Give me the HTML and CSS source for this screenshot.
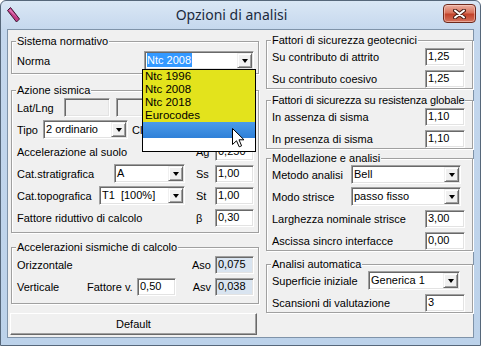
FILE: index.html
```html
<!DOCTYPE html>
<html>
<head>
  <meta charset="UTF-8">
  <title>Opzioni di analisi</title>
  <link rel="stylesheet" href="styles.css">
</head>
<body>
<div class="window">
  <div class="titlebar">
    <svg class="app-icon" width="13" height="16" viewBox="0 0 13 16">
      <polygon points="0.5,3.5 3.5,0.5 12.5,12 9.5,15" fill="#c23a86" stroke="#3b1830" stroke-width="1"/>
      <polygon points="2,3.5 3.5,2 10.5,11" fill="#e07ab8"/>
    </svg>
    <div class="title">Opzioni di analisi</div>
    <div class="close-btn">
      <svg width="13" height="10" viewBox="0 0 13 10">
        <path d="M2,1.5 L11,8.5 M11,1.5 L2,8.5" stroke="#4a1e16" stroke-width="4" stroke-linecap="round"/>
        <path d="M2,1.5 L11,8.5 M11,1.5 L2,8.5" stroke="#fff" stroke-width="2" stroke-linecap="round"/>
      </svg>
    </div>
  </div>

  <div class="client">
    <!-- colonna sinistra -->
    <div class="col col-left">
      <fieldset class="group g-norma">
        <legend>Sistema normativo</legend>
        <div class="rows">
          <div class="row">
            <span class="lbl grow">Norma</span>
            <div class="combo w-norma"><span class="combo-text"><span class="sel">Ntc 2008</span></span><span class="combo-btn"></span></div>
          </div>
        </div>
      </fieldset>

      <fieldset class="group g-azione">
        <legend>Azione sismica</legend>
        <div class="rows">
          <div class="row">
            <span class="lbl w-latlng">Lat/Lng</span>
            <div class="edit disabled w-coord"></div>
            <div class="edit disabled w-coord"></div>
          </div>
          <div class="row">
            <span class="lbl w-tipo">Tipo</span>
            <div class="combo w-tipocombo"><span class="combo-text">2 ordinario</span><span class="combo-btn"></span></div>
            <span class="lbl w-classe">Classe</span>
            <div class="combo grow"><span class="combo-text">II</span><span class="combo-btn"></span></div>
          </div>
          <div class="row">
            <span class="lbl grow">Accelerazione al suolo</span>
            <span class="sym">Ag</span>
            <div class="edit">0,250</div>
          </div>
          <div class="row">
            <span class="lbl grow">Cat.stratigrafica</span>
            <div class="combo w-strat"><span class="combo-text">A</span><span class="combo-btn"></span></div>
            <span class="sym">Ss</span>
            <div class="edit">1,00</div>
          </div>
          <div class="row">
            <span class="lbl grow">Cat.topografica</span>
            <div class="combo w-topo"><span class="combo-text">T1&nbsp; [100%]</span><span class="combo-btn"></span></div>
            <span class="sym">St</span>
            <div class="edit">1,00</div>
          </div>
          <div class="row">
            <span class="lbl grow">Fattore riduttivo di calcolo</span>
            <span class="sym">β</span>
            <div class="edit">0,30</div>
          </div>
        </div>
      </fieldset>

      <fieldset class="group g-acc">
        <legend>Accelerazioni sismiche di calcolo</legend>
        <div class="rows rows-acc">
          <div class="row row-acc">
            <span class="lbl grow">Orizzontale</span>
            <span class="sym-acc">Aso</span>
            <div class="edit readonly">0,075</div>
          </div>
          <div class="row row-acc">
            <span class="lbl w-vert">Verticale</span>
            <span class="lbl w-fatt">Fattore v.</span>
            <div class="edit">0,50</div>
            <span class="lbl grow"></span>
            <span class="sym-acc">Asv</span>
            <div class="edit readonly">0,038</div>
          </div>
        </div>
      </fieldset>

      <div class="btn">Default</div>
    </div>

    <!-- colonna destra -->
    <div class="col col-right">
      <fieldset class="group g-geo">
        <legend>Fattori di sicurezza geotecnici</legend>
        <div class="rows">
          <div class="row"><span class="lbl grow">Su contributo di attrito</span><div class="edit w-right">1,25</div></div>
          <div class="row"><span class="lbl grow">Su contributo coesivo</span><div class="edit w-right">1,25</div></div>
        </div>
      </fieldset>

      <fieldset class="group g-glob">
        <legend>Fattori di sicurezza su resistenza globale</legend>
        <div class="rows">
          <div class="row"><span class="lbl grow">In assenza di sisma</span><div class="edit w-right">1,10</div></div>
          <div class="row"><span class="lbl grow">In presenza di sisma</span><div class="edit w-right">1,10</div></div>
        </div>
      </fieldset>

      <fieldset class="group g-mod">
        <legend>Modellazione e analisi</legend>
        <div class="rows">
          <div class="row">
            <span class="lbl grow">Metodo analisi</span>
            <div class="combo w-metodo"><span class="combo-text">Bell</span><span class="combo-btn"></span></div>
          </div>
          <div class="row">
            <span class="lbl grow">Modo strisce</span>
            <div class="combo w-metodo"><span class="combo-text">passo fisso</span><span class="combo-btn"></span></div>
          </div>
          <div class="row"><span class="lbl grow">Larghezza nominale strisce</span><div class="edit w-right">3,00</div></div>
          <div class="row"><span class="lbl grow">Ascissa sincro interfacce</span><div class="edit w-right">0,00</div></div>
        </div>
      </fieldset>

      <fieldset class="group g-auto">
        <legend>Analisi automatica</legend>
        <div class="rows">
          <div class="row">
            <span class="lbl grow">Superficie iniziale</span>
            <div class="combo w-superf"><span class="combo-text">Generica 1</span><span class="combo-btn"></span></div>
          </div>
          <div class="row"><span class="lbl grow">Scansioni di valutazione</span><div class="edit w-right">3</div></div>
        </div>
      </fieldset>
    </div>
  </div>

  <!-- lista aperta della combo Norma -->
  <div class="dropdown">
    <div class="dd-item">Ntc 1996</div>
    <div class="dd-item">Ntc 2008</div>
    <div class="dd-item">Ntc 2018</div>
    <div class="dd-item">Eurocodes</div>
    <div class="dd-sel"></div>
    <div class="dd-empty"></div>
  </div>

  <svg class="cursor" width="13" height="20" viewBox="0 0 13 20">
    <path d="M0.5,0.5 L0.5,16.5 L4.5,12.8 L7.2,18.8 L9.6,17.8 L7,11.8 L12,11.8 Z" fill="#fff" stroke="#000" stroke-width="1" stroke-linejoin="miter"/>
  </svg>
</div>
</body>
</html>
```

FILE: styles.css
```css
body {
  margin: 0;
  font-family: "Liberation Sans", Arial, sans-serif;
  font-size: 11px;
  color: #000;
  background: #fff;
}

.window {
  position: relative;
  width: 481px;
  height: 346px;
  box-sizing: border-box;
  border: 1px solid #56677a;
  border-radius: 6px 6px 0 0;
  background: linear-gradient(#dae7f5, #c4d7ed 30px, #bcd2ea);
  padding: 0 6px 7px 6px;
  display: flex;
  flex-direction: column;
}

/* barra del titolo */
.titlebar {
  height: 28px;
  display: flex;
  align-items: flex-start;
}

.app-icon {
  margin-top: 6px;
  flex: none;
}

.title {
  flex: 1;
  text-align: center;
  font-family: "Noto Sans", "Open Sans", sans-serif;
  font-size: 14px;
  line-height: 28px;
  color: #1b2a3d;
}

.close-btn {
  width: 31px;
  height: 17px;
  margin-top: 3px;
  margin-right: -2px;
  border: 1px solid #6e2a1d;
  border-radius: 4px;
  background: linear-gradient(#eab0a2, #d8735c 45%, #c2432b 55%, #d4735e);
  box-shadow: inset 0 0 0 1px rgba(255, 220, 210, 0.5);
  display: flex;
  align-items: center;
  justify-content: center;
}

/* area client */
.client {
  flex: 1;
  background: #f0f0f0;
  border: 1px solid #7f93a9;
  display: flex;
  gap: 7px;
  padding: 0 0 0 3px;
}

.col {
  display: flex;
  flex-direction: column;
}

.col-left {
  width: 248px;
}

.col-right {
  width: 207px;
}

.group {
  margin: 0;
  min-width: 0;
  border: 1px solid #a0a0a0;
  box-shadow: inset 1px 1px 0 #fff, 1px 1px 0 #fff;
  padding: 0 4px 0 5px;
}

.group legend {
  padding: 0 1px;
  margin-left: -1px;
  line-height: 13px;
  white-space: nowrap;
  background: #f0f0f0;
}

.col-right .group {
  padding: 0 7px 0 5px;
}

.g-glob legend {
  letter-spacing: -0.15px;
}

.g-norma  { margin-top: 5px;  padding-top: 3px; padding-bottom: 3px; }
.g-azione { margin-top: 10px; padding-top: 1px; padding-bottom: 5px; }
.g-acc    { margin-top: 8px;  padding-top: 2px; padding-bottom: 7px; }
.g-geo    { margin-top: 4px;  padding-top: 5px; padding-bottom: 3px; }
.g-glob   { margin-top: 5px;  padding-top: 2px; padding-bottom: 2px; }
.g-mod    { margin-top: 3px;  padding-top: 4px; padding-bottom: 2px; }
.g-auto   { margin-top: 7px;  padding-top: 1px; padding-bottom: 4px; }

.rows {
  display: flex;
  flex-direction: column;
  gap: 3px;
}

.rows-acc {
  gap: 4px;
}

.row {
  display: flex;
  align-items: center;
  height: 19px;
}

.row-acc {
  height: 18px;
}

.lbl {
  white-space: nowrap;
}

.grow {
  flex: 1;
}

.w-latlng { width: 47px; }
.w-tipo { width: 26px; }
.w-classe { width: 38px; margin-left: 4px; }
.w-vert { width: 70px; }
.w-fatt { width: 50px; }

.sym {
  width: 30px;
  padding-left: 11px;
  box-sizing: border-box;
}

.sym-acc {
  margin-right: 4px;
}

/* caselle di testo */
.edit {
  box-sizing: border-box;
  width: 39px;
  height: 18px;
  background: #fff;
  border: 1px solid;
  border-color: #a0a0a0 #fff #fff #a0a0a0;
  box-shadow: inset 1px 1px 0 #696969, inset -1px -1px 0 #e3e3e3;
  padding-left: 2px;
  line-height: 15px;
  white-space: nowrap;
}

.edit.disabled {
  background: #f0f0f0;
}

.edit.readonly {
  background: #d9e4f0;
}

.w-coord {
  width: 46px;
  height: 19px;
  margin-right: 6px;
}

.w-right {
  width: 40px;
}

/* combo box */
.combo {
  box-sizing: border-box;
  height: 19px;
  display: flex;
  background: #fff;
  border: 1px solid;
  border-color: #a0a0a0 #fff #fff #a0a0a0;
  box-shadow: inset 1px 1px 0 #696969, inset -1px -1px 0 #e3e3e3;
  padding: 1px;
}

.combo-text {
  flex: 1;
  padding-left: 1px;
  line-height: 15px;
  white-space: nowrap;
  overflow: hidden;
}

.combo-text .sel {
  background: #3399ff;
  color: #fff;
  padding: 1px 1px 1px 0;
}

.combo-btn {
  box-sizing: border-box;
  width: 15px;
  height: 15px;
  background: #f0f0f0;
  border: 1px solid;
  border-color: #f0f0f0 #696969 #696969 #f0f0f0;
  box-shadow: inset 1px 1px 0 #fff, inset -1px -1px 0 #a0a0a0;
  display: flex;
  align-items: center;
  justify-content: center;
}

.combo-btn::after {
  content: "";
  border-left: 3.5px solid transparent;
  border-right: 3.5px solid transparent;
  border-top: 4px solid #000;
  margin-top: 1px;
}

.w-norma { width: 110px; }
.w-tipocombo { width: 85px; }
.w-strat { width: 71px; }
.w-topo { width: 86px; }
.w-metodo { width: 110px; margin-right: 4px; }
.w-superf { width: 92px; margin-right: 5px; }

/* pulsante */
.btn {
  box-sizing: border-box;
  margin-top: 9px;
  margin-left: -1px;
  height: 22px;
  width: 247px;
  background: #f0f0f0;
  border: 1px solid;
  border-color: #fff #696969 #696969 #fff;
  box-shadow: inset -1px -1px 0 #a0a0a0;
  text-align: center;
  line-height: 20px;
}

/* lista a discesa aperta */
.dropdown {
  position: absolute;
  left: 141px;
  top: 68px;
  width: 114px;
  box-sizing: border-box;
  border: 1px solid #000;
  background: #fff;
}

.dd-item {
  height: 13px;
  line-height: 13px;
  padding-left: 2px;
  font-size: 11.5px;
  background: #e3e31c;
}

.dd-sel {
  height: 16px;
  background: linear-gradient(#4c9be9, #2f80d8);
}

.dd-empty {
  height: 13px;
}

.cursor {
  position: absolute;
  left: 231px;
  top: 127px;
}
```
